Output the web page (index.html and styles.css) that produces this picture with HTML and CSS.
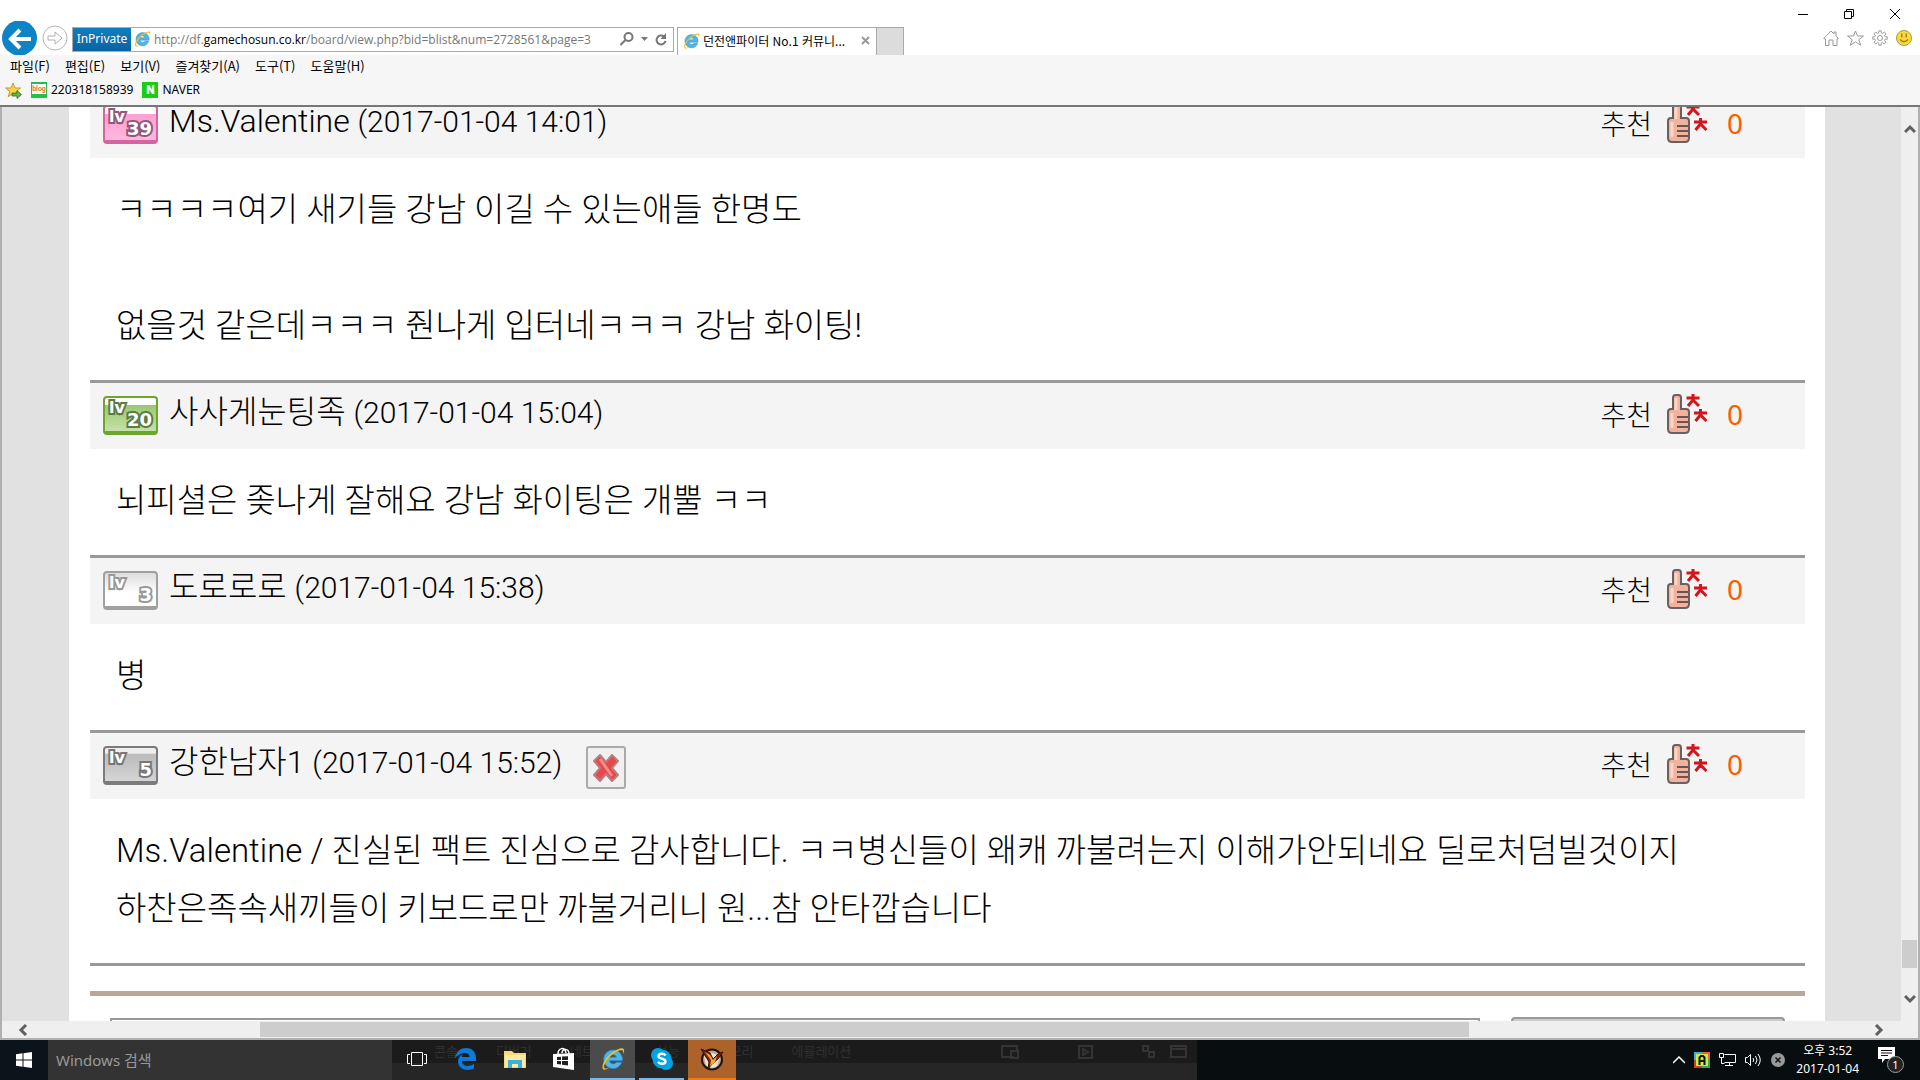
FILE: index.html
```
<!DOCTYPE html>
<html lang="ko">
<head>
<meta charset="utf-8">
<title>던전앤파이터 No.1 커뮤니티</title>
<link rel="stylesheet" href="styles.css">
</head>
<body>
<svg class="defs" aria-hidden="true">
  <defs>
    <symbol id="ie" viewBox="0 0 18 18">
      <path d="M9 2.2a7 7 0 1 0 6.6 9.3h-4a3 3 0 0 1-5.3-1.2H16A7 7 0 0 0 9 2.2zM6.4 7.6a2.7 2.7 0 0 1 5.2 0z" fill="#4fb5e8" stroke="#2b86c4" stroke-width=".5"/>
      <path d="M1.6 16.6C-.2 14.4 3 8.200 8 4.400 12 1.400 16 .3 17 1.500c.7.9.3 2.500-.4 3.900.2-1.600 0-2.600-.8-2.900-1.600-.6-5 1-8.200 3.900-3.900 3.600-6.100 8.200-5 9.400.6.7 2 .4 3.700-.5-1.900 1.500-3.900 2.200-4.700 1.300z" fill="#f5bd1c"/>
    </symbol>
    <symbol id="thumb" viewBox="0 0 40 40">
      <path d="M6 15V4q0-3 2.500-3h3Q14 1 14 4v11h5q3 0 3 3v17q0 4-4 4H5q-4 0-4-4V18q0-3 3-3z" fill="#f3b29d" stroke="#6a6060" stroke-width="2"/>
      <path d="M9 4v12M5 19v15" stroke="#fbd5c6" stroke-width="3"/>
      <path d="M10 23h11M10 28h11M10 33h11" stroke="#6a5555" stroke-width="2"/>
      <path d="M19.500 4h13M26 0v7M26 6l-5 6M26 6l6 6M27 19h13M33.500 15v7M33.500 21l-5 6M33.500 21l6 6" stroke="#d3141c" stroke-width="3" fill="none"/>
    </symbol>
  </defs>
</svg>

<div class="desktop">
  <section class="browser">
    <header class="frame">
      <div class="frame-left">
        <button class="nav back" aria-label="뒤로"><svg viewBox="0 0 37 34"><circle cx="18.500" cy="17" r="17.500" fill="#0e84c7"/><path d="M11 18h19M19 9l-9 9 9 9" fill="none" stroke="#fff" stroke-width="4"/></svg></button>
        <button class="nav forward" aria-label="앞으로"><svg viewBox="0 0 26 26"><circle cx="13" cy="13" r="12" fill="#fff" stroke="#b5b5b5"/><path d="M6 11h7V7l7 6-7 6v-4H6z" fill="none" stroke="#b0b0b0"/></svg></button>
        <form class="address">
          <span class="inprivate">InPrivate</span>
          <svg class="ie18"><use href="#ie"/></svg>
          <a class="url" href="#">http://df.<b>gamechosun.co.kr</b>/board/view.php?bid=blist&amp;num=2728561&amp;page=3</a>
          <button type="button" aria-label="검색"><svg width="14" height="14" viewBox="0 0 14 14"><circle cx="8.500" cy="5" r="4" fill="none" stroke="#777" stroke-width="2"/><path d="M5.500 8l-5 5" stroke="#777" stroke-width="2"/></svg></button>
          <button type="button" aria-label="목록"><svg width="7" height="4" viewBox="0 0 7 4"><path d="M0 0h7L3.500 4z" fill="#777"/></svg></button>
          <button type="button" aria-label="새로 고침"><svg width="12" height="13" viewBox="0 0 12 13"><path d="M9 3.500A4.500 4.500 0 1 0 10.500 8" fill="none" stroke="#777" stroke-width="2"/><path d="M11 0v6H5.500z" fill="#777"/></svg></button>
        </form>
      </div>
      <div class="tabs">
        <div class="tab"><svg class="ie18"><use href="#ie"/></svg><span>던전앤파이터 No.1 커뮤니...</span><button aria-label="탭 닫기"><svg width="9" height="9" viewBox="0 0 9 9"><path d="M1 1l7 7M8 1L1 8" stroke="#999" stroke-width="2"/></svg></button></div>
        <button class="newtab" aria-label="새 탭"></button>
      </div>
      <div class="controls">
        <div class="winbtns">
          <button aria-label="최소화"><svg width="10" height="10"><path d="M0 5.500h10" stroke="#000"/></svg></button>
          <button aria-label="이전 크기로"><svg width="10" height="10" fill="none" stroke="#000"><path d="M.5 2.500h7v7h-7zM2.500 2V.5h7v7H8"/></svg></button>
          <button aria-label="닫기"><svg width="10" height="10" stroke="#000"><path d="M0 0l10 10M10 0L0 10"/></svg></button>
        </div>
        <div class="tools">
          <button aria-label="홈"><svg width="16" height="16" viewBox="0 0 16 16" fill="none" stroke="#999"><path d="M.7 8.500L8 1l3 3V2h2v4l2.500 2.500-1.500.5v6.500H10V10H6v5.500H2.500V9z"/></svg></button>
          <button aria-label="즐겨찾기"><svg width="17" height="16" viewBox="0 0 17 16" fill="none" stroke="#999"><path d="M8.500 1l2 5h6l-4.700 3.700 2 5.600-5.300-3.500-5.300 3.500 2-5.600L.5 6h6z"/></svg></button>
          <button aria-label="도구"><svg width="16" height="16" viewBox="0 0 16 16" fill="none" stroke="#999"><path d="M6.800.8h2.400v2l1.500.6 1.500-1.400 1.800 1.800-1.400 1.500.6 1.500h2v2.400h-2l-.6 1.500 1.400 1.500-1.800 1.800-1.500-1.400-1.500.6v2H6.800v-2l-1.500-.6L3.800 14 2 12.200l1.400-1.500-.6-1.500h-2V6.800h2l.6-1.500L2 3.800 3.800 2l1.500 1.400 1.500-.6z"/><circle cx="8" cy="8" r="2.500"/></svg></button>
          <button aria-label="의견"><svg width="16" height="16" viewBox="0 0 16 16"><circle cx="8" cy="8" r="7.500" fill="#f8dc3c" stroke="#a99a4a"/><path d="M5.800 3.500v4M10.200 3.500v4M4 9.500q4 4.500 8 0" fill="none" stroke="#b0701c" stroke-width="1.300"/></svg></button>
        </div>
      </div>
    </header>
    <nav class="menubar">
      <button>파일(F)</button><button>편집(E)</button><button>보기(V)</button><button>즐겨찾기(A)</button><button>도구(T)</button><button>도움말(H)</button>
    </nav>
    <nav class="favorites">
      <button aria-label="즐겨찾기에 추가"><svg width="17" height="17" viewBox="0 0 17 17"><path d="M8 1l2 5h5.500l-4.300 3.500 1.600 5L8 11.500l-4.800 3.200 1.600-5.200L.5 6H6z" fill="#fbd44a" stroke="#d2952a"/><path d="M7 11h5V8.500l4.500 4-4.500 4V14H7z" fill="#62b53e" stroke="#2f7a26" stroke-width=".8"/></svg></button>
      <a href="#"><span class="fav blog">blog</span>220318158939</a>
      <a href="#"><span class="fav naver">N</span>NAVER</a>
    </nav>

    <div class="viewport">
      <main class="page">
        <article class="comment">
          <header><span class="lv pink"><i>lv</i><b>39</b></span><h2><span class="name">Ms.Valentine</span> <time>(2017-01-04 14:01)</time></h2><span class="vote">추천<button aria-label="추천"><svg><use href="#thumb"/></svg></button><output>0</output></span></header>
          <p>ㅋㅋㅋㅋ여기 새기들 강남 이길 수 있는애들 한명도<br><br>없을것 같은데ㅋㅋㅋ 줜나게 입터네ㅋㅋㅋ 강남 화이팅!</p>
        </article>
        <article class="comment">
          <header><span class="lv green"><i>lv</i><b>20</b></span><h2><span class="name">사사게눈팅족</span> <time>(2017-01-04 15:04)</time></h2><span class="vote">추천<button aria-label="추천"><svg><use href="#thumb"/></svg></button><output>0</output></span></header>
          <p>뇌피셜은 좆나게 잘해요 강남 화이팅은 개뿔 ㅋㅋ</p>
        </article>
        <article class="comment">
          <header><span class="lv white"><i>lv</i><b>3</b></span><h2><span class="name">도로로로</span> <time>(2017-01-04 15:38)</time></h2><span class="vote">추천<button aria-label="추천"><svg><use href="#thumb"/></svg></button><output>0</output></span></header>
          <p>병</p>
        </article>
        <article class="comment">
          <header><span class="lv gray"><i>lv</i><b>5</b></span><h2><span class="name">강한남자1</span> <time>(2017-01-04 15:52)</time></h2><button class="delete" aria-label="삭제"><svg width="28" height="30" viewBox="0 0 28 30"><path d="M8 2l6 7 6-7 6 6-6 7 6 7-6 6-6-7-6 7-6-6 6-7-6-7z" fill="#e8484c" stroke="#b58080" stroke-width="2" stroke-linejoin="round"/><path d="M8 6l12 17" stroke="#f58a8a" stroke-width="3"/></svg></button><span class="vote">추천<button aria-label="추천"><svg><use href="#thumb"/></svg></button><output>0</output></span></header>
          <p>Ms.Valentine / 진실된 팩트 진심으로 감사합니다. ㅋㅋ병신들이 왜캐 까불려는지 이해가안되네요 딜로처덤빌것이지 하찬은족속새끼들이 키보드로만 까불거리니 원...참 안타깝습니다</p>
        </article>
        <form class="write"><textarea aria-label="댓글"></textarea><button type="button" aria-label="등록"></button></form>
      </main>
      <div class="vscroll">
        <svg width="12" height="10" viewBox="0 0 12 10"><path d="M1 8l5-5 5 5" fill="none" stroke="#606060" stroke-width="3"/></svg>
        <span class="vthumb"></span>
        <svg width="12" height="10" viewBox="0 0 12 10"><path d="M1 2l5 5 5-5" fill="none" stroke="#606060" stroke-width="3"/></svg>
      </div>
    </div>
    <div class="hscroll">
      <svg width="10" height="12" viewBox="0 0 10 12"><path d="M8 1L3 6l5 5" fill="none" stroke="#606060" stroke-width="3"/></svg>
      <div class="htrack"><span class="hthumb"></span></div>
      <svg width="10" height="12" viewBox="0 0 10 12"><path d="M2 1l5 5-5 5" fill="none" stroke="#606060" stroke-width="3"/></svg>
    </div>
  </section>

  <footer class="taskbar">
    <button class="start" aria-label="시작"><svg width="16" height="16" viewBox="0 0 16 16" fill="#fff"><path d="M0 2.200L6.500 1.300v6.200H0zM7.500 1.200L16 0v7.500H7.500zM0 8.500h6.500v6.200L0 13.800zM7.500 8.500H16V16l-8.500-1.200z"/></svg></button>
    <input class="search" aria-label="Windows 검색" placeholder="Windows 검색">
    <div class="apps">
      <div class="ghost" aria-hidden="true"><span>콘솔</span><span>디버거</span><span>네트워크</span><span>성능</span><span>메모리</span><span>에뮬레이션</span><svg width="190" height="23" viewBox="0 0 190 23" fill="none" stroke="#343434" stroke-width="2"><path d="M15 17H3V6h15v5M12 11h7v7h-7zM80 6h13v12H80zM84 9v6l5-3zM144 6h5v5h-5zM150 12h5v5h-5zM172 6h15v11h-15zM172 9h15"/></svg></div>
      <button class="app" aria-label="작업 보기"><svg width="20" height="15" viewBox="0 0 20 15" fill="none" stroke="#fff"><path d="M4.500.5h11v13h-11zM3 2.500H.5v9H3M17 2.500h2.500v9H17"/></svg></button>
      <button class="app" aria-label="Edge"><svg width="21" height="22" viewBox="0 0 21 22"><path d="M0 10C1 4 5 0 11 0c7 0 10 5 10 10v3H7c0 6 8 6 12 3v4.500C12 24 3 21 3 13.500 3 9 7 6.500 8 6.300 7 7.500 7 9 7 9h7.500c0-6-9-5-14.500 1z" fill="#0b7ad8"/></svg></button>
      <button class="app" aria-label="파일 탐색기"><svg width="22" height="19" viewBox="0 0 22 19"><path d="M0 1h8l2 2h12v15H0z" fill="#f5d77c"/><path d="M1 5h20v12H1z" fill="#fde9a2"/><path d="M4 18v-8h14v8h-4v-4H8v4z" fill="#3db0e0"/></svg></button>
      <button class="app" aria-label="스토어"><svg width="21" height="24" viewBox="0 0 21 24"><path d="M5 7C5 1 12-1 13 6M9 6c0-5 7-5 7 1" fill="none" stroke="#fff" stroke-width="1.500"/><path d="M0 7l21-1v17L0 20z" fill="#fff"/><path d="M4 10l4-.3V13H4zM9 9.600l6-.4V13H9zM4 14h4v3.500L4 17zM9 14h6v4.500l-6-.8z" fill="#202020"/></svg></button>
      <button class="app active" aria-label="Internet Explorer"><svg width="24" height="24"><use href="#ie"/></svg></button>
      <button class="app running" aria-label="Skype"><svg width="22" height="22" viewBox="0 0 22 22"><circle cx="7" cy="7" r="7" fill="#00a3e4"/><circle cx="15" cy="15" r="7" fill="#00a3e4"/><circle cx="11" cy="11" r="9.500" fill="#00a3e4"/><path d="M14.500 7.500C13 4.800 7.500 5.200 7.500 8.200c0 3.300 7 1.800 7 5.200 0 3-6 3.200-7.500.4" fill="none" stroke="#fff" stroke-width="2.400"/></svg></button>
      <button class="app alert" aria-label="게임"><svg width="24" height="24" viewBox="0 0 24 24"><circle cx="12" cy="12.500" r="10" fill="#b9ab98" stroke="#20120a" stroke-width="2"/><path d="M4 9q8-6 16 1l-3 9q-6 4-11-1z" fill="#eee6d8"/><path d="M1 2l9 4 3 6 5-5 5-2-5 7-6 5-4 5 1-7z" fill="#8c1d10" stroke="#2b1408"/><path d="M5 5l5 3 3 5 4-4-2 6-5 4 1-6z" fill="#f6a82a"/></svg></button>
    </div>
    <div class="tray">
      <button aria-label="숨겨진 아이콘"><svg width="12" height="8" viewBox="0 0 12 8"><path d="M0 7l6-6 6 6" fill="none" stroke="#fff" stroke-width="1.500"/></svg></button>
      <button aria-label="입력기"><svg width="16" height="16" viewBox="0 0 16 16"><path d="M0 0h8v8H0z" fill="#4aa6d8"/><path d="M8 0h8v8H8z" fill="#e0662a"/><path d="M0 8h8v8H0z" fill="#c8402a"/><path d="M8 8h8v8H8z" fill="#33a860"/><path d="M2 2h12v12H2z" fill="#c6ee45"/><path d="M5.500 13V5.500L7 4h2l1.500 1.500V13M5.500 9h5" fill="none" stroke="#111" stroke-width="2"/></svg></button>
      <button aria-label="네트워크"><svg width="17" height="14" viewBox="0 0 17 14" fill="none" stroke="#fff"><path d="M5.500 1.500h11v8h-11M.5.5h4v4h-4zM2.500 4.500v6h3M10.500 9.500v3M6 12.500h8"/></svg></button>
      <button aria-label="볼륨"><svg width="17" height="14" viewBox="0 0 17 14" fill="none" stroke="#fff"><path d="M.5 4.500h2l3-3v11l-3-3h-2zM8 5q1.500 2 0 4M10.500 3q3 4 0 8M13 1q4.500 6 0 12"/></svg></button>
      <button aria-label="상태"><svg width="14" height="14" viewBox="0 0 14 14"><circle cx="7" cy="7" r="7" fill="#999"/><path d="M4.500 4.500l5 5M9.500 4.500l-5 5" stroke="#111" stroke-width="1.500"/></svg></button>
      <time class="clock">오후 3:52<br>2017-01-04</time>
      <button class="action" aria-label="알림"><svg width="17" height="16" viewBox="0 0 17 16"><path d="M0 0h17v12H7l-3 4v-4H0z" fill="#fff"/><path d="M3 3.500h11M3 6h11M3 8.500h7" stroke="#111"/></svg><span>1</span></button>
    </div>
  </footer>
</div>
</body>
</html>
```
FILE: styles.css
```
* { box-sizing: border-box; }
body { margin: 0; font-family: "Noto Sans", "Noto Sans CJK KR", sans-serif; color: #000; }
button { border: 0; padding: 0; background: none; font: inherit; color: inherit; display: flex; align-items: center; justify-content: center; }
a { color: inherit; text-decoration: none; }
svg { display: block; flex: none; }
.defs { position: absolute; width: 0; height: 0; }
.desktop { height: 100vh; display: flex; flex-direction: column; overflow: hidden; }
.browser { flex: 1; min-height: 0; display: flex; flex-direction: column; background: #fff; }

/* window frame */
.frame { height: 55px; display: flex; align-items: flex-end; font-size: 12px; }
.frame-left { display: flex; align-items: center; width: 36%; max-width: 674px; padding-left: 1px; gap: 4px; }
.nav.back svg { width: 37px; height: 34px; }
.nav.forward svg { width: 26px; height: 26px; }
.address { flex: 1; display: flex; align-items: center; height: 25px; border: 1px solid #aaa; gap: 7px; padding-right: 6px; margin-top: 2px; white-space: nowrap; overflow: hidden; }
.inprivate { background: linear-gradient(#0f7ec0, #0a63a2); color: #fff; height: 23px; line-height: 22px; width: 58px; text-align: center; margin-right: -4px; }
.ie18 { width: 17px; height: 18px; }
.url { flex: 1; color: #777; margin-left: -4px; font-family: "Open Sans", sans-serif; }
.url b { font-weight: 400; color: #000; }
.tabs { display: flex; height: 28px; margin-left: 3px; }
.tab { width: 200px; border: 1px solid #aaa; border-bottom: 0; display: flex; align-items: center; gap: 3px; padding: 0 6px 2px 5px; font-family: "Noto Sans CJK KR", sans-serif; white-space: nowrap; }
.tab span { flex: 1; }
.newtab { width: 27px; background: #dcdcdc; border: 1px solid #aaa; border-left: 0; border-bottom: 0; }
.controls { margin-left: auto; align-self: stretch; display: flex; flex-direction: column; align-items: flex-end; padding: 9px 8px 0 0; gap: 11px; }
.winbtns { display: flex; gap: 36px; padding-right: 12px; }
.tools { display: flex; gap: 8px; }
.menubar, .favorites { background: #f6f6f6; display: flex; align-items: center; line-height: 18px; }
.menubar { height: 21px; gap: 15px; padding-left: 10px; font-size: 13px; font-family: "Noto Sans CJK KR", sans-serif; }
.favorites { height: 31px; gap: 9px; padding: 0 0 1px 5px; font-size: 12px; border-bottom: 2px solid #777; }
.favorites a { display: flex; align-items: center; gap: 4px; }
.fav { width: 16px; height: 16px; color: #fff; font: 700 12px/16px "Roboto", sans-serif; text-align: center; background: #19ce0f; }
.fav.blog { font-size: 7px; line-height: 14px; color: #e0742c; background: linear-gradient(#1fc24a 2px, #fff 2px, #fff 12px, #1fc24a 12px); border: 1px solid #1fc24a; border-width: 0 1px; }
.fav.naver { font-weight: 900; }

/* page */
.viewport { flex: 1; min-height: 0; display: flex; overflow: hidden; border: 2px solid #b0b0b0; border-width: 0 2px; background: #e1e1e1; }
.page { flex: 1; min-width: 0; margin: 0 76px 0 67px; padding: 0 20px 0 21px; background: #fff; font-family: "Roboto", "Noto Sans CJK KR", sans-serif; font-weight: 300; overflow: hidden; word-break: keep-all; }
.comment:first-child { margin-top: -18px; }
.comment header { height: 69px; border-top: 3px solid #999; background: #f4f4f4; display: flex; align-items: flex-start; padding: 13px 62px 0 13px; }
.comment h2 { margin: 2px 0 0 11px; font-weight: 300; font-size: 32px; line-height: 28px; white-space: nowrap; }
.comment time { font-size: 30px; }
.comment p { margin: 0; padding: 23px 26px 25px; font-size: 33px; line-height: 58px; }
.comment:nth-child(4) { border-bottom: 3px solid #999; }
.lv { width: 55px; height: 39px; border: 2px solid; border-bottom-width: 4px; border-radius: 4px; padding: 2px 4px; display: flex; justify-content: space-between; color: #fff; -webkit-text-stroke: 4px #776; paint-order: stroke fill; }
.lv i { font: 700 16px/16px "DejaVu Sans", sans-serif; }
.lv b { font: 700 18px/18px "DejaVu Sans", sans-serif; align-self: flex-end; margin-left: -8px; }
.pink { border-color: #d465a0; background: linear-gradient(#fff 20%, #ff9fd2 22%, #ffb8de); -webkit-text-stroke-color: #93577a; }
.green { border-color: #6ea52c; background: linear-gradient(#fff 20%, #9bc774 22%, #c4e2a5); -webkit-text-stroke-color: #5c7a42; }
.white { border-color: #a0a0a0; background: linear-gradient(#ddd, #fff 60%); -webkit-text-stroke-color: #999; }
.gray { border-color: #7b7b7b; background: linear-gradient(#eee 15%, #bbb 20%, #d5d5d5); -webkit-text-stroke-color: #777; }
.vote { margin: -2px 0 0 auto; display: flex; align-items: center; height: 40px; font-size: 28px; gap: 15px; }
.vote svg { width: 40px; height: 40px; }
.vote output { font: 28px/40px "Noto Sans", sans-serif; color: #ff5a00; margin-left: 5px; }
.delete { width: 40px; height: 43px; border: 2px solid #aaa; border-radius: 3px; background: #f0f0f0; margin: 0 0 0 24px; }
.write { margin-top: 25px; border-top: 5px solid #b8a898; padding: 22px 20px 0; display: flex; gap: 31px; align-items: flex-start; }
.write textarea { flex: 1; height: 120px; border: 2px solid #999; resize: none; }
.write button { width: 274px; height: 120px; border: 2px solid #999; border-radius: 4px; background: #ccc; margin-top: -1px; }
.vscroll { width: 17px; background: #efefef; display: flex; flex-direction: column; align-items: center; padding: 17px 0; }
.vthumb { width: 15px; height: 28px; background: #cdcdcd; margin: auto 0 26px; }
.hscroll { height: 19px; background: #efefef; border: 2px solid #b0b0b0; border-top: 0; display: flex; align-items: center; padding: 0 34px 0 16px; }
.htrack { flex: 1; display: grid; grid-template-columns: 232fr 1207fr 405fr; }
.hthumb { grid-column: 2; height: 15px; background: #cdcdcd; }

/* taskbar */
.taskbar { height: 40px; background: #080d10; display: flex; color: #fff; }
.start { width: 48px; background: #0b141a; }
.search { width: 344px; border: 0; padding: 0 8px; background: #333; color: #fff; font: 15px "Noto Sans", "Noto Sans CJK KR", sans-serif; }
.search::placeholder { color: #999; opacity: 1; }
.apps { position: relative; width: 805px; padding-left: 2px; display: flex; background: linear-gradient(#1b1b1b 57%, #262626 57%); }
.ghost { position: absolute; inset: 0; display: flex; gap: 38px; padding: 0 8px 0 42px; color: #303030; font-size: 13px; line-height: 23px; }
.ghost svg { margin-left: auto; }
.app { position: relative; width: 45px; margin-right: 4px; border-bottom: 2px solid transparent; }
.app.active { background: #4b4b4b; border-color: #76b9ed; }
.app.running { border-color: #76b9ed; }
.app.alert { width: 48px; background: #ad6229; border-color: #f7770f; }
.tray { margin-left: auto; display: flex; align-items: center; gap: 9px; padding-right: 16px; font-family: "Noto Sans", "Noto Sans CJK KR", sans-serif; }
.clock { font-size: 12px; line-height: 18px; text-align: center; padding: 0 10px 0 2px; white-space: nowrap; }
.action { position: relative; width: 26px; height: 26px; align-items: flex-start; justify-content: flex-start; }
.action span { position: absolute; right: 0; bottom: 0; width: 17px; height: 17px; border: 1px solid #999; border-radius: 50%; background: #222; font-size: 11px; line-height: 15px; text-align: center; }
```
